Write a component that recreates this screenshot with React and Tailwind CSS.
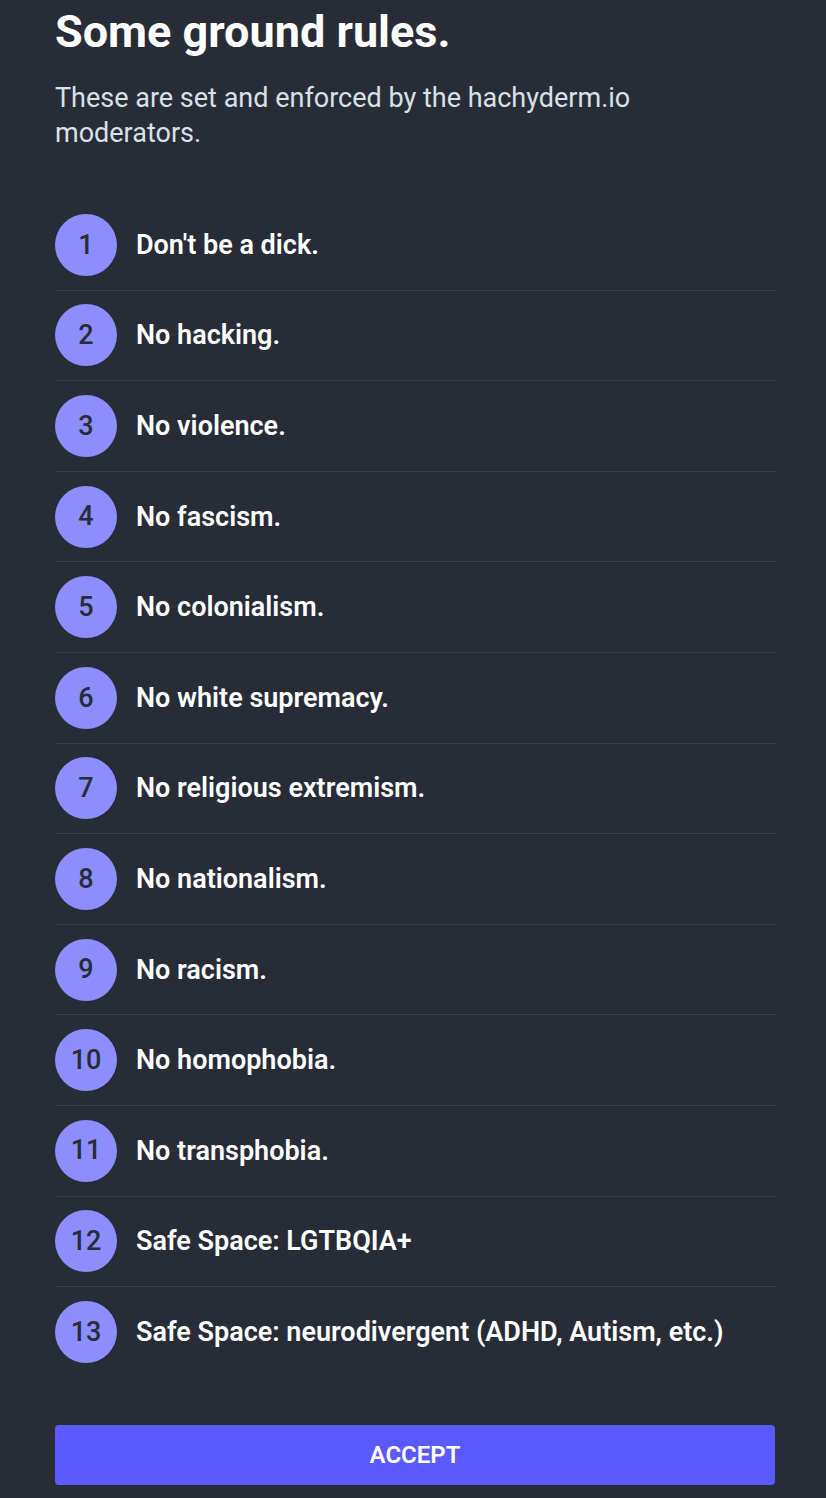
const rules = [
  "Don't be a dick.",
  "No hacking.",
  "No violence.",
  "No fascism.",
  "No colonialism.",
  "No white supremacy.",
  "No religious extremism.",
  "No nationalism.",
  "No racism.",
  "No homophobia.",
  "No transphobia.",
  "Safe Space: LGTBQIA+",
  "Safe Space: neurodivergent (ADHD, Autism, etc.)",
];

const RuleRow = ({ index, text, last }) => (
  <li
    className={`flex items-center gap-[19px] py-[13.8px] ${last ? "" : "border-b border-[#393f4f]"}`}
  >
    <span className="flex h-[62px] w-[62px] shrink-0 items-center justify-center rounded-full bg-[#8c8dff] text-[27px] font-medium text-[#282c37]">
      {index + 1}
    </span>
    <span className="text-[27px] font-semibold leading-[34px] text-white">{text}</span>
  </li>
);

export default function App() {
  return (
    <div
      className="min-h-[1498px] bg-[#282c37] pl-[55px] pr-[51px] pt-[2px]"
      style={{ fontFamily: "Roboto, 'Liberation Sans', sans-serif" }}
    >
      <h1 className="text-[45px] font-bold leading-[60px] text-white">Some ground rules.</h1>
      <p className="mt-[19px] text-[27px] leading-[35px] text-[#d9e1e8]">
        These are set and enforced by the hachyderm.io moderators.
      </p>

      <ul className="mt-[49px]">
        {rules.map((rule, index) => (
          <RuleRow key={index} index={index} text={rule} last={index === rules.length - 1} />
        ))}
      </ul>

      <button
        type="button"
        className="mt-[48px] flex h-[60px] w-full items-center justify-center rounded-[4px] bg-[#595aff] text-[24px] font-semibold text-white"
      >
        ACCEPT
      </button>
    </div>
  );
}
